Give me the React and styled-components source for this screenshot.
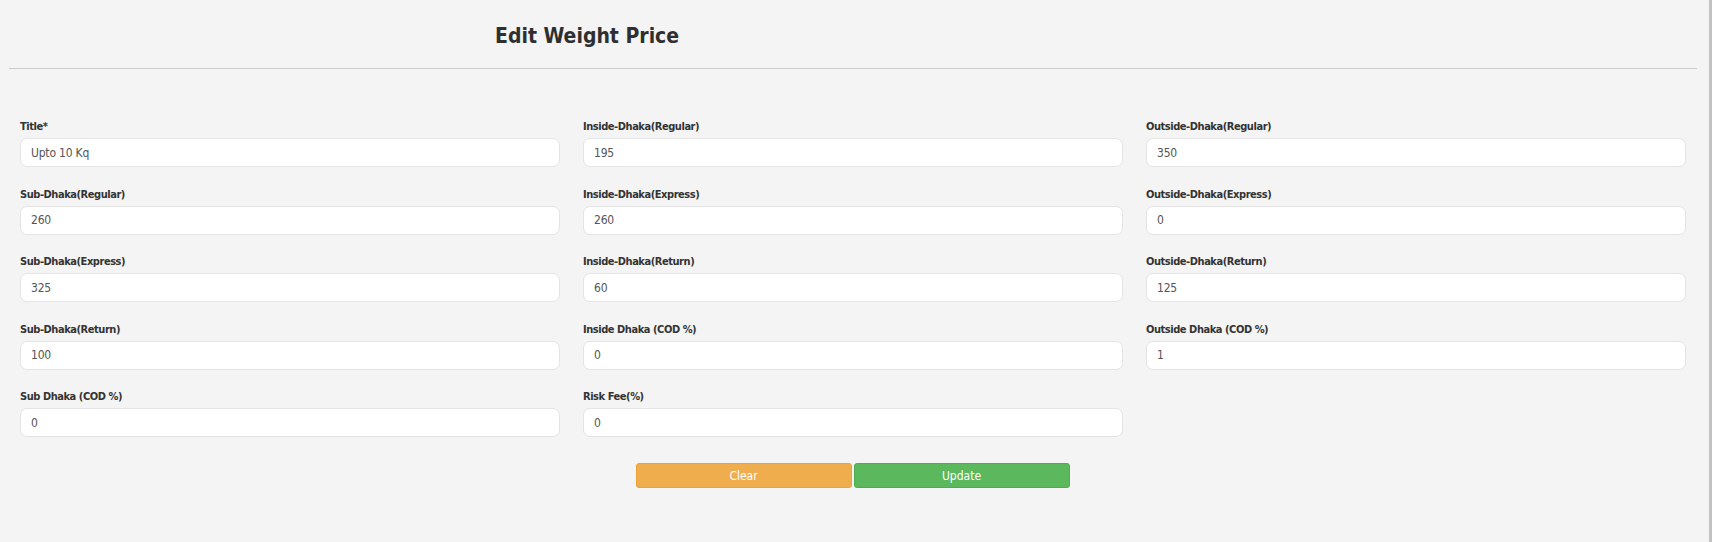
import React from 'react';
import styled, { createGlobalStyle } from 'styled-components';

const GlobalStyle = createGlobalStyle`
  html, body {
    margin: 0;
    padding: 0;
    background: #f4f4f4;
  }
  * {
    box-sizing: border-box;
  }
`

const Page = styled.div`
  min-height: 542px;
  background: #f4f4f4;
  border-right: 3px solid #c2c2c2;
  font-family: "DejaVu Sans Condensed", Roboto, sans-serif;
  color: #333;
`

const Header = styled.div`
  margin: 0 12px 0 9px;
  padding: 24px 0 20px 486px;
  border-bottom: 1px solid #cbcbcb;
`

const Title = styled.h2`
  margin: 0;
  font-size: 21px;
  line-height: 24px;
  font-weight: 700;
  color: #2f2f2f;
`

const Form = styled.form`
  padding: 50px 0 0 20px;
`

const Grid = styled.div`
  display: grid;
  grid-template-columns: repeat(3, 540px);
  column-gap: 23px;
  row-gap: 19.5px;
`

const Field = styled.div`
  display: flex;
  flex-direction: column;
`

const Label = styled.label`
  font-size: 11px;
  line-height: 16px;
  font-weight: 700;
  letter-spacing: -0.45px;
  color: #333;
  margin-bottom: 3px;
`

const Input = styled.input`
  height: 29px;
  width: 100%;
  padding: 0 10px;
  border: 1px solid #e4e4e4;
  border-radius: 7px;
  background: #fff;
  font-family: inherit;
  font-size: 12px;
  letter-spacing: -0.2px;
  color: #555;
  outline: none;
`

const Actions = styled.div`
  display: flex;
  justify-content: center;
  gap: 2px;
  margin-top: 26px;
  padding-right: 24px;
`

const Button = styled.button`
  width: 216px;
  height: 25px;
  border-radius: 3px;
  border: 1px solid ${p => p.$border};
  background: ${p => p.$bg};
  color: #fff;
  font-family: inherit;
  font-size: 12px;
  cursor: pointer;
`

const fields = [
  { label: 'Title*', value: 'Upto 10 Kq' },
  { label: 'Inside-Dhaka(Regular)', value: '195' },
  { label: 'Outside-Dhaka(Regular)', value: '350' },
  { label: 'Sub-Dhaka(Regular)', value: '260' },
  { label: 'Inside-Dhaka(Express)', value: '260' },
  { label: 'Outside-Dhaka(Express)', value: '0' },
  { label: 'Sub-Dhaka(Express)', value: '325' },
  { label: 'Inside-Dhaka(Return)', value: '60' },
  { label: 'Outside-Dhaka(Return)', value: '125' },
  { label: 'Sub-Dhaka(Return)', value: '100' },
  { label: 'Inside Dhaka (COD %)', value: '0' },
  { label: 'Outside Dhaka (COD %)', value: '1' },
  { label: 'Sub Dhaka (COD %)', value: '0' },
  { label: 'Risk Fee(%)', value: '0' },
]

export default function App() {
  return (
    <Page>
      <GlobalStyle />
      <Header>
        <Title>Edit Weight Price</Title>
      </Header>
      <Form onSubmit={e => e.preventDefault()}>
        <Grid>
          {fields.map(f => (
            <Field key={f.label}>
              <Label>{f.label}</Label>
              <Input defaultValue={f.value} />
            </Field>
          ))}
        </Grid>
        <Actions>
          <Button type="button" $bg="#f0ad4e" $border="#eea236">Clear</Button>
          <Button type="submit" $bg="#5cb85c" $border="#4cae4c">Update</Button>
        </Actions>
      </Form>
    </Page>
  )
}
